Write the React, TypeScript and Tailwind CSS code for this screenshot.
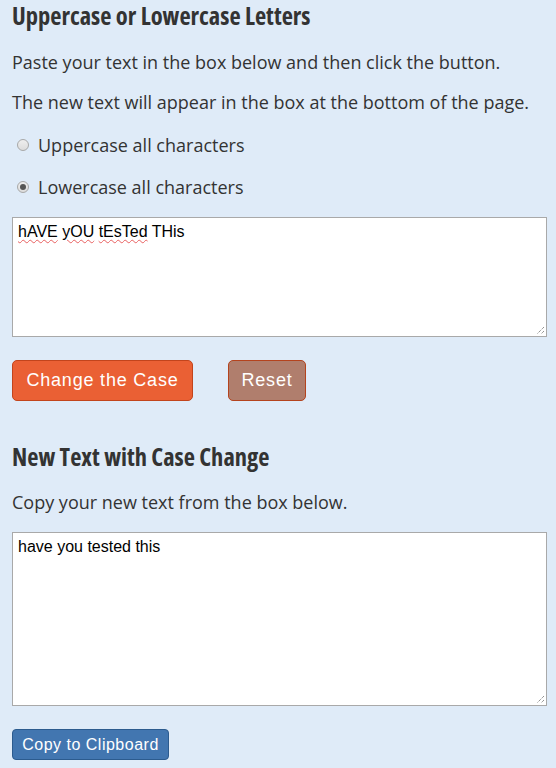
import React from "react";

const body = { fontFamily: '"Open Sans", "Noto Sans", sans-serif' };
const arial = { fontFamily: '"Liberation Sans", Arial, sans-serif' };

function Grip() {
  return (
    <svg className="absolute right-[1px] bottom-[1px]" width="10" height="10" viewBox="0 0 10 10">
      <path d="M9 2 L2 9 M9 6 L6 9" stroke="#666" strokeWidth="1" strokeDasharray="1 1" />
    </svg>
  );
}

function Radio({ checked, label }: { checked?: boolean; label: string }) {
  return (
    <div className="flex items-center h-[42px]">
      <span className="ml-[5px] w-[12px] h-[12px] rounded-full border border-[#a8a8a8] bg-gradient-to-b from-[#eeeeee] to-[#dcdcdc] flex items-center justify-center">
        {checked && <span className="w-[6px] h-[6px] rounded-full bg-[#555]" />}
      </span>
      <span className="ml-[9px] text-[18px] text-[#333]">{label}</span>
    </div>
  );
}

export default function App() {
  return (
    <div className="min-h-[768px] w-[556px] bg-[#dfebf8] px-[12px] pb-[20px] text-[#333]" style={body}>
      <h1
        className="text-[24.5px] font-bold leading-[32px] text-[#333]"
        style={{ ...body, fontStretch: "condensed" }}
      >
        Uppercase or Lowercase Letters
      </h1>
      <p className="mt-[17px] text-[18px] leading-[26px]">Paste your text in the box below and then click the button.</p>
      <p className="mt-[14px] text-[18px] leading-[26px]">The new text will appear in the box at the bottom of the page.</p>
      <div className="mt-[9px]">
        <Radio label="Uppercase all characters" />
        <Radio checked label="Lowercase all characters" />
      </div>
      <div
        className="relative mt-[9px] w-[535px] h-[120px] bg-white border border-[#a9a9a9] px-[5px] pt-[4px] text-[16px] text-black leading-[20px]"
        style={arial}
      >
        <span className="underline decoration-wavy decoration-[#e86060] decoration-1 underline-offset-2">hAVE</span>{" "}
        <span className="underline decoration-wavy decoration-[#e86060] decoration-1 underline-offset-2">yOU</span>{" "}
        <span className="underline decoration-wavy decoration-[#e86060] decoration-1 underline-offset-2">tEsTed</span>{" "}
        THis
        <Grip />
      </div>
      <div className="mt-[23px] flex items-center gap-[35px]">
        <button
          className="h-[41px] w-[181px] rounded-[5px] bg-[#ea6034] border border-[#c2441c] text-white text-[18px] tracking-[0.8px]"
          style={arial}
        >
          Change the Case
        </button>
        <button
          className="h-[41px] w-[78px] rounded-[5px] bg-[#b07e6d] border border-[#b4431e] text-white text-[18px] tracking-[0.8px]"
          style={arial}
        >
          Reset
        </button>
      </div>
      <h2
        className="mt-[40px] text-[24.5px] font-bold leading-[32px] text-[#333]"
        style={{ ...body, fontStretch: "condensed" }}
      >
        New Text with Case Change
      </h2>
      <p className="mt-[16px] text-[18px] leading-[26px]">Copy your new text from the box below.</p>
      <div
        className="relative mt-[17px] w-[535px] h-[174px] bg-white border border-[#a9a9a9] px-[5px] pt-[4px] text-[16px] text-black leading-[20px]"
        style={arial}
      >
        have you tested this
        <Grip />
      </div>
      <button
        className="block mt-[23px] h-[31px] w-[157px] rounded-[4px] bg-[#4276b0] border border-[#2c5b8e] text-white text-[16px] tracking-[0.5px]"
        style={arial}
      >
        Copy to Clipboard
      </button>
    </div>
  );
}
